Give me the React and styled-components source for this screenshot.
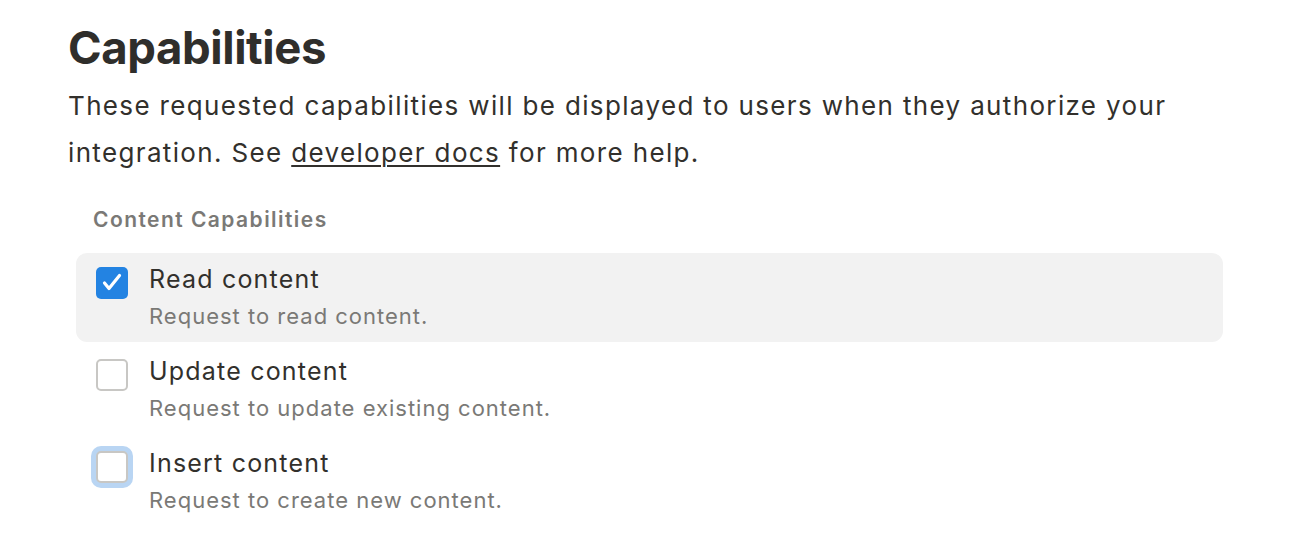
import React, { useState } from 'react';
import styled, { createGlobalStyle } from 'styled-components';

const GlobalStyle = createGlobalStyle`
  body {
    margin: 0;
    background: #ffffff;
    font-family: 'Inter', 'Liberation Sans', sans-serif;
    color: #32302c;
    -webkit-font-smoothing: antialiased;
  }
`;

const Page = styled.div`
  box-sizing: border-box;
  width: 1314px;
  padding: 20px 91px 0 68px;
`;

const Title = styled.h1`
  margin: 0;
  font-size: 45.5px;
  line-height: 56px;
  font-weight: 700;
  letter-spacing: -0.4px;
  color: #2f2e2b;
`;

const Intro = styled.p`
  margin: 6px 0 0 0;
  font-size: 26px;
  line-height: 47px;
  letter-spacing: 1.35px;
  color: #32302c;
`;

const DocsLink = styled.a`
  color: inherit;
  text-decoration: underline;
  text-underline-offset: 3px;
  text-decoration-thickness: 2px;
`;

const SectionLabel = styled.div`
  margin: 31px 0 20px 25px;
  font-size: 21px;
  line-height: 26px;
  font-weight: 600;
  letter-spacing: 1.45px;
  color: #7a7976;
`;

const List = styled.div`
  display: flex;
  flex-direction: column;
  gap: 3px;
  margin-left: 8px;
`;

const Row = styled.label`
  box-sizing: border-box;
  display: flex;
  align-items: flex-start;
  gap: 21px;
  height: 89px;
  padding: 14px 20px 0 20px;
  border-radius: 11px;
  background: ${(p) => (p.$active ? '#f2f2f2' : 'transparent')};
  cursor: pointer;
`;

const Box = styled.span`
  box-sizing: border-box;
  flex: 0 0 32px;
  width: 32px;
  height: 32px;
  border-radius: 5px;
  display: flex;
  align-items: center;
  justify-content: center;
  background: ${(p) => (p.$checked ? '#2383e2' : '#ffffff')};
  border: ${(p) => (p.$checked ? 'none' : '2px solid #c8c7c4')};
  box-shadow: ${(p) => (p.$focused ? '0 0 0 5px #b9d5f3' : 'none')};
`;

const Texts = styled.div`
  display: flex;
  flex-direction: column;
  margin-top: -3px;
`;

const ItemTitle = styled.div`
  font-size: 25px;
  line-height: 30px;
  letter-spacing: 1.2px;
  color: #32302c;
`;

const ItemDesc = styled.div`
  margin-top: 9px;
  font-size: 22px;
  line-height: 26px;
  letter-spacing: 1px;
  color: #7a7976;
`;

const Check = () => (
  <svg width="32" height="32" viewBox="0 0 32 32" fill="none">
    <path
      d="M8.5 16 L13 21.5 L23.5 8.5"
      stroke="#fff"
      strokeWidth="3.2"
      strokeLinecap="round"
      strokeLinejoin="round"
    />
  </svg>
);

const items = [
  { title: 'Read content', desc: 'Request to read content.', checked: true },
  { title: 'Update content', desc: 'Request to update existing content.', checked: false },
  { title: 'Insert content', desc: 'Request to create new content.', checked: false, focused: true },
];

const App = () => {
  const [state, setState] = useState(items.map((i) => i.checked));
  return (
    <Page>
      <GlobalStyle />
      <Title>Capabilities</Title>
      <Intro>
        These requested capabilities will be displayed to users when they authorize your
        integration. See <DocsLink href="#docs">developer docs</DocsLink> for more help.
      </Intro>
      <SectionLabel>Content Capabilities</SectionLabel>
      <List>
        {items.map((item, i) => (
          <Row
            key={item.title}
            $active={i === 0}
            onClick={(e) => {
              e.preventDefault();
              setState((s) => s.map((v, j) => (j === i ? !v : v)));
            }}
          >
            <Box $checked={state[i]} $focused={item.focused}>
              {state[i] && <Check />}
            </Box>
            <Texts>
              <ItemTitle>{item.title}</ItemTitle>
              <ItemDesc>{item.desc}</ItemDesc>
            </Texts>
          </Row>
        ))}
      </List>
    </Page>
  );
};

export default App;
